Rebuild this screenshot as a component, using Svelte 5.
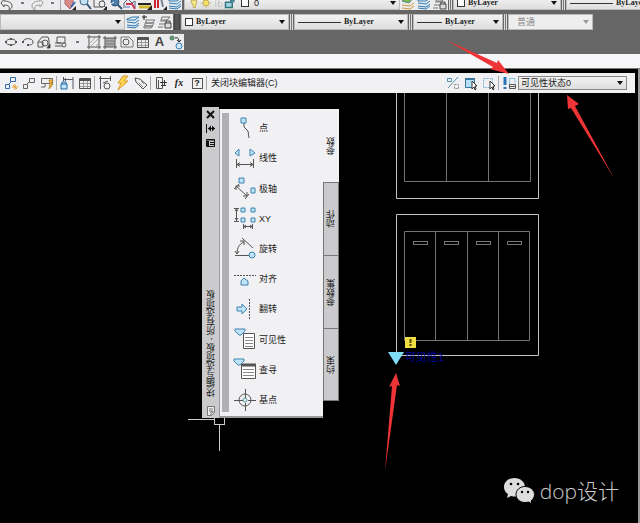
<script lang="ts">
    interface Tool {
        icon: string;
        label: string;
    }

    let visibility = $state("可见性状态0");
    let activeTab = $state("参数");

    const tabs = ["参数", "动作", "参数集", "约束"];

    const standardTools: (Tool | null)[] = [
        { icon: "undo", label: "放弃" },
        { icon: "dot", label: "放弃列表" },
        { icon: "redo", label: "重做" },
        { icon: "dot", label: "重做列表" },
        null,
        { icon: "pan", label: "平移" },
        { icon: "zoom", label: "实时缩放" },
        { icon: "zoomwin", label: "窗口缩放" },
        { icon: "zoomprev", label: "缩放上一个" },
        { icon: "match", label: "特性匹配" },
        { icon: "ruler", label: "测量" },
        { icon: "brush", label: "画笔" },
        { icon: "layers", label: "图层特性" },
    ];

    const layerTools: Tool[] = [
        { icon: "layersgreen", label: "图层状态" },
        { icon: "layers", label: "置为当前" },
        { icon: "layerlock", label: "上一个图层" },
    ];

    const layerRowTools: Tool[] = [
        { icon: "layers", label: "图层" },
        { icon: "layerplus", label: "新建图层" },
        { icon: "layerlock", label: "锁定图层" },
    ];

    const drawTools: Tool[] = [
        { icon: "ellipse", label: "椭圆" },
        { icon: "arc", label: "椭圆弧" },
        { icon: "insert", label: "插入块" },
        { icon: "block", label: "创建块" },
        { icon: "dot", label: "点" },
        { icon: "hatch", label: "图案填充" },
        { icon: "gradient", label: "渐变色" },
        { icon: "region", label: "面域" },
        { icon: "table", label: "表格" },
        { icon: "text", label: "多行文字" },
        { icon: "add", label: "添加选定对象" },
    ];

    const blockTools: (Tool | null)[] = [
        { icon: "editblock", label: "编辑块定义" },
        { icon: "saveblock", label: "保存块定义" },
        { icon: "testblock", label: "测试块" },
        null,
        { icon: "constraint", label: "约束" },
        { icon: "table", label: "块表" },
        null,
        { icon: "param", label: "参数" },
        { icon: "action", label: "动作" },
        { icon: "attr", label: "定义属性" },
        null,
        { icon: "palette", label: "编写选项板" },
        { icon: "fx", label: "参数管理器" },
        { icon: "help", label: "帮助" },
        null,
    ];

    const stateTools: (Tool | null)[] = [
        { icon: "percent", label: "可见性模式" },
        { icon: "show", label: "使可见" },
        { icon: "hide", label: "使不可见" },
        null,
        { icon: "states", label: "管理可见性状态" },
    ];

    const params: Tool[] = [
        { icon: "p-point", label: "点" },
        { icon: "p-linear", label: "线性" },
        { icon: "p-polar", label: "极轴" },
        { icon: "p-xy", label: "XY" },
        { icon: "p-rotate", label: "旋转" },
        { icon: "p-align", label: "对齐" },
        { icon: "p-flip", label: "翻转" },
        { icon: "p-visible", label: "可见性" },
        { icon: "p-lookup", label: "查寻" },
        { icon: "p-base", label: "基点" },
    ];

    const grip = 'fill="#bfe4f8" stroke="#3f83b0"';

    // 16x16 for toolbars, 24x24 for the p-* palette icons
    const icons: Record<string, string> = {
        undo: '<path d="M2 8l3-4v2c5 0 8 2 8 5 0 2-1 3-3 4 1-3 0-5-5-5v2z" fill="#eee"/>',
        redo: '<path d="M14 8l-3-4v2c-5 0-8 2-8 5 0 2 1 3 3 4-1-3 0-5 5-5v2z" fill="#eee" stroke="#999"/>',
        dot: '<path d="M7 8h3" stroke="#777" stroke-width="2"/>',
        pan: '<path d="M3 3h8v7l-3 4-5-5z" fill="#d98b88" stroke="#a66"/><path d="M9 12l4-5" stroke="#36b" stroke-width="2"/><path d="M10 15h4v-4z" fill="#222" stroke="none"/>',
        zoom: '<circle cx="7" cy="6" r="4" fill="#c4e1f4" stroke="#468"/><path d="M10 9l4 5" stroke="#357" stroke-width="2"/>',
        zoomwin: '<path d="M2 3h9v9H2z"/><circle cx="10" cy="9" r="3" fill="#eee"/><path d="M12 11l2 2"/><path d="M11 15h4v-4z" fill="#222" stroke="none"/>',
        zoomprev: '<circle cx="8" cy="7" r="4" fill="#4b7ea8" stroke="#357"/><path d="M11 10l4 4" stroke="#357" stroke-width="2"/><path d="M4 9l3-2" stroke="#fff"/>',
        match: '<path d="M2 13V8l4-4 4 4 3-2v7" stroke="#567"/><path d="M4 9h6l3 5" stroke="#c35" stroke-width="2"/><path d="M3 12h5" stroke="#47b"/>',
        ruler: '<path d="M1 9h13" stroke="#222" stroke-width="2"/><path d="M2 12h12" stroke="#d2b629" stroke-width="3"/><path d="M10 15h5v-5z" fill="#222" stroke="none"/>',
        brush: '<path d="M3 3v10M6 3v10" stroke="#c23" stroke-width="2"/><path d="M9 3l2 9" stroke="#789" stroke-width="2"/><path d="M11 15h4v-4z" fill="#222" stroke="none"/>',
        layers: '<path d="M2 5l5-2h7l-4 3H2zM2 8l8 1 4-3M2 11l8 1 4-3M2 13l8 1 4-3" stroke="#3978ab" fill="#d5ebf7"/>',
        layersgreen: '<path d="M2 6l5-3h6l-4 5z" fill="#7fba50" stroke="#587"/><path d="M2 10l8 1 4-3M2 13l8 1 4-3" stroke="#cb9a39"/>',
        layerplus: '<path d="M5 6h9l-3 3H5zM4 9h9l-2 3H4zM3 12h9l-2 2H3z" stroke="#777"/><path d="M1 3h5M3 1v5" stroke="#222"/>',
        layerlock: '<path d="M5 3h8l-3 3H4zM3 7h7M2 10h6M1 13h5" stroke="#777"/><path d="M8 9h6v5H8zM9 9V7h4v2" fill="#ddd" stroke="#444"/>',
        bulb: '<path d="M5 4h6l1 3-2 4v3H7v-3L4 7z" fill="#f5e689" stroke="#a89845"/>',
        sun: '<circle cx="8" cy="8" r="4" fill="#f5df66" stroke="#b69b38"/><path d="M8 1v2M8 13v2M1 8h2M13 8h2M3 13l1-1M12 12l1 1" stroke="#b69b38"/>',
        freeze: '<path d="M5 4v9M9 4v9" stroke="#bbb"/><circle cx="11" cy="10" r="3" stroke="#bbb"/>',
        lock: '<path d="M2 7h9v7H2zM9 7V4h4v3" fill="#9ed5df" stroke="#367684" stroke-width="2"/>',
        ellipse: '<ellipse cx="8" cy="8" rx="5" ry="3"/><path d="M7 5h2M2 8h2M12 8h2M7 11h2" stroke-width="2"/>',
        arc: '<path d="M3 8c1-5 10-4 10 0 0 3-3 3-5 3"/><path d="M2 8h2M7 11h2" stroke-width="2"/>',
        insert: '<path d="M2 8l4-5h6l1 3v5M2 8h5v5H2z"/><circle cx="9" cy="9" r="3"/><path d="M11 14h3v-4z" fill="#222"/>',
        block: '<path d="M4 3h8v6H4zM2 9h6M2 12h7"/><circle cx="11" cy="11" r="2" fill="#eee"/>',
        hatch: '<path d="M3 3h10v10H3zM1 3h2V1M13 1v2h2M1 13h2v2M13 15v-2h2"/><path d="M4 9l5-5M4 13l8-8M9 13l4-4" stroke="#aaa"/>',
        gradient: '<path d="M3 4h10v9H3z" fill="#aaa"/><path d="M1 4h2V2M13 2v2h2M1 13h2v2M13 15v-2h2"/><path d="M4 7h8M4 10h8" stroke="#777"/>',
        region: '<path d="M2 3h8l4 4v6H2z" stroke="#777"/><circle cx="7" cy="8" r="3"/>',
        table: '<path d="M2.500 3.500h11v10h-11z"/><path d="M3 8.500h10M3 11.500h10M6.500 5v8M10.500 5v8" stroke="#999"/><path d="M3 5h10" stroke-width="2"/>',
        add: '<circle cx="4" cy="4" r="2" fill="#68a35f" stroke="#476"/><path d="M7 4c3-1 4 1 4 4M9 6l2 2 2-2" stroke="#222"/><circle cx="11" cy="12" r="3" fill="#cbe7f9" stroke="#3b7dac"/>',
        editblock: '<path d="M7.500 2.500h5v4h-5zM2.500 9.500h4v4h-4zM6 9l2-2" stroke="#356baa"/><path d="M12 9v6M9 12h6M10 10l4 4" stroke="#e2a332"/>',
        saveblock: '<path d="M8.500 3.500h5v4h-5zM2.500 9.500h4v4h-4zM6 9l2-2" stroke="#666"/>',
        testblock: '<path d="M2.500 3.500h11v5h-11zM6 9v3M2 12h4" stroke="#666"/><path d="M10 5h4l-2 4h2l-4 5 1-5z" fill="#f1bd4b" stroke="#b98a2d"/>',
        constraint: '<path d="M5 4.500h9M4.500 2v4M14 2v12M5 5l2-2M5 4l2 2" stroke="#556"/><path d="M2 9h6v5H2zM3 9V7h4v2" fill="#c0e3fa" stroke="#2466a9"/>',
        param: '<path d="M2 3.500h12M3.500 1v13M13.500 1v5M6 8l5-2"/><circle cx="10" cy="11" r="3"/>',
        action: '<path d="M8 1h5L9 6h4L3 15l3-7H3z" fill="#ffd34f" stroke="#d79a31"/>',
        attr: '<path d="M2 3l5 1 7 6-4 4-7-7z" fill="#eee"/><path d="M6 8l4 4M8 6l3 3" stroke="#888"/>',
        palette: '<path d="M3.500 2.500h6v11h-6zM5.500 5v8"/><path d="M7 7.500h7M8 10.500h5M11.500 5v6" stroke="#333"/>',
        percent: '<path d="M2.500 3.500h4v3h-4zM13 2L3 13" stroke="#5b90ae"/><path d="M9.500 9.500h4v4h-4z" stroke="#888" stroke-dasharray="2 1"/>',
        show: '<path d="M2.500 3.500h9v9h-9z" fill="#b7dff7" stroke="#37759c"/><path d="M2 4h10" stroke="#37759c" stroke-width="2"/><path d="M9 6v8l2-2 1 3 1-1-1-3h2z" fill="#fff" stroke="#333"/>',
        hide: '<path d="M2.500 3.500h9v9h-9z" stroke="#7ab2d6" stroke-dasharray="2 1"/><path d="M9 6v8l2-2 1 3 1-1-1-3h2z" fill="#fff" stroke="#333"/>',
        states: '<path d="M4 2v8M4 12v2" stroke="#2876ba" stroke-width="3"/><path d="M8 3.500h6V8M8.500 3v9" stroke="#83bfe2"/><path d="M8.500 9.500h6v4h-6zM8 11.500h7" stroke="#555"/>',
        "p-point": `<path d="M11 7v4l4 4 1 7"/><path d="M8 2h5v5H8z" ${grip}/>`,
        "p-linear": `<path d="M6 3v7L2 7zM17 3v7l5-3z" ${grip}/><path d="M3.500 13v9M20.500 13v9M4 18.500h16M7 16.500l-3 2 3 2M17 16.500l3 2-3 2"/>`,
        "p-polar": `<path d="M6 1h5v5H6zM18 11h4v5h-4z" ${grip}/><path d="M3 9l11 10M6 7l-5 5M16 17l-4 5M3 13V9h4M10 19h4v-4"/>`,
        "p-xy": `<path d="M8 1h4v4H8zM18 1h4v4h-4zM8 11h4v4H8zM18 11h4v4h-4z" ${grip}/><path d="M3.500 1v13M1 1.500h5M1 14.500h5M2 4l1.500-2L5 4M2 11l1.500 2L5 11M10 19.500h10M10.500 17v5M19.500 17v5M13 18l-2 1.500 2 1.500M17 18l2 1.500-2 1.500"/>`,
        "p-rotate": `<path d="M2 18.500h14M9 1l11 10M4 17C4 11 6 7 11 5M2 14l2 3 2-3M7 4h4l0 4"/><circle cx="19" cy="18" r="3" ${grip}/>`,
        "p-align": `<path d="M1 8.500h22" stroke-dasharray="2 1"/><path d="M8 18v-4l3-3 4 3v4z" ${grip}/>`,
        "p-flip": `<path d="M4 10h5V7l5 5-5 5v-3H4z" ${grip}/><path d="M16.500 2v20" stroke-dasharray="2 1"/>`,
        "p-visible": `<path d="M10.500 5.500h11v15h-11z" fill="#fff"/><path d="M12 9.500h8M12 12.500h8M12 15.500h8M12 18.500h8" stroke="#888"/><path d="M2 1h10v2L8 7H6L2 3z" ${grip}/>`,
        "p-lookup": `<path d="M8.500 6.500h14v14h-14z" fill="#fff"/><path d="M8 7h15" stroke-width="3"/><path d="M10 11.500h11M10 14.500h11M10 17.500h11" stroke="#888"/><path d="M1 1h10v2L7 7H5L1 3z" ${grip}/>`,
        "p-base": '<circle cx="12" cy="12" r="6"/><circle cx="12" cy="12" r="2" stroke="#59a"/><path d="M12.500 1v9M12.500 15v8M1 12.500h9M15 12.500h8"/>',
    };
</script>

{#snippet icon(name: string, size = 16)}
    <svg
        width={size}
        height={size}
        viewBox={name.startsWith("p-") ? "0 0 24 24" : "0 0 16 16"}
        fill="none"
        stroke="#555"
        aria-hidden="true"
    >
        {@html icons[name] ?? ""}
    </svg>
{/snippet}

{#snippet tools(list: (Tool | null)[])}
    {#each list as t}
        {#if t}
            <button class="tool" aria-label={t.label}>
                {#if t.icon === "text"}
                    <b class="glyph">A</b>
                {:else if t.icon === "fx"}
                    <i class="fx">fx</i>
                {:else if t.icon === "help"}
                    <span class="help">?</span>
                {:else}
                    {@render icon(t.icon)}
                {/if}
            </button>
        {:else}
            <span class="sep"></span>
        {/if}
    {/each}
{/snippet}

{#snippet byLayer(kind: string, label: string)}
    <label class="combo {kind}">
        {#if kind === "color"}
            <span class="swatch"></span>
        {:else}
            <span class="sample"></span>
        {/if}
        <select aria-label={label}>
            <option>ByLayer</option>
        </select>
        <span class="arrow"></span>
    </label>
{/snippet}

<div class="page">
    <header>
        <div class="row first">
            <div class="bar standard">{@render tools(standardTools)}</div>
            <div class="combo layer">
                {#each ["bulb", "sun", "freeze", "lock"] as name}
                    {@render icon(name, 12)}
                {/each}
                <span class="swatch"></span>
                <select aria-label="图层"><option>0</option></select>
                <span class="arrow"></span>
            </div>
            <div class="bar">{@render tools(layerTools)}</div>
            <span class="grip"></span>
            {@render byLayer("color", "颜色控制")}
            <span class="grip"></span>
            {@render byLayer("line", "线型控制")}
        </div>
        <div class="row">
            <label class="combo space">
                <select aria-label="工作空间"><option></option></select>
                <span class="arrow"></span>
            </label>
            <div class="bar">{@render tools(layerRowTools)}</div>
            <span class="grip dark"></span>
            {@render byLayer("color", "颜色控制")}
            <span class="grip"></span>
            {@render byLayer("line", "线型控制")}
            <span class="grip"></span>
            {@render byLayer("weight", "线宽控制")}
            <span class="grip"></span>
            <label class="combo plot">
                <select aria-label="打印样式控制" disabled>
                    <option>普通</option>
                </select>
                <span class="arrow"></span>
            </label>
        </div>
        <div class="row">
            <div class="bar draw">{@render tools(drawTools)}</div>
        </div>
    </header>
    <div class="band"></div>

    <main>
        <div class="blockbar">
            {@render tools(blockTools)}
            <button class="close-editor">关闭块编辑器(C)</button>
            <span class="fill"></span>
            {@render tools(stateTools)}
            <label class="combo state">
                <select aria-label="可见性状态" bind:value={visibility}>
                    <option>可见性状态0</option>
                </select>
                <span class="arrow"></span>
            </label>
        </div>

        <div class="canvas">
            <svg class="drawing" width="100%" height="100%" fill="none">
                <g stroke="#c4c4c4">
                    <path d="M396.500 0V105.500H538.500V0" />
                    <path d="M396.500 121.500H538.500V262.500H396.500z" />
                </g>
                <g stroke="#747474">
                    <path d="M404.500 0V88.500H530.500V0M446.500 0V88M488.500 0V88" />
                    <path
                        d="M404.500 138.500H529.500V247.500H404.500zM435.500 138V247M467.500 138V247M498.500 138V247"
                    />
                    {#each [413.5, 444.5, 476.5, 507.5] as x}
                        <rect {x} y="148.500" width="14" height="3" />
                    {/each}
                </g>
                <path d="M188 326.500H214M219.500 332V358" stroke="#ccc" />
                <rect x="214.500" y="321.500" width="10" height="10" stroke="#ccc" />
                <path d="M388 259h16l-8 13z" fill="#7fdcf5" />
                <text x="405" y="268" fill="#0000a0">可见性1</text>
                <rect x="405" y="244" width="11" height="11" fill="#f0dd42" />
                <path d="M410.500 246v4M410.500 251v2" stroke="#554a00" stroke-width="2" />
            </svg>

            <section class="palette" aria-label="块编写选项板">
                <div class="titlebar">
                    <button aria-label="关闭">
                        <svg width="11" height="11" viewBox="0 0 11 11" stroke="#111" stroke-width="2">
                            <path d="M2 2l7 7M9 2l-7 7" />
                        </svg>
                    </button>
                    <button aria-label="自动隐藏">
                        <svg width="11" height="11" viewBox="0 0 11 11" stroke="#111">
                            <path d="M1.500 1v9M3 5.500h7" />
                            <path d="M3 5.500l3-3v6zM10 5.500l-3-3v6z" fill="#111" stroke="none" />
                        </svg>
                    </button>
                    <button aria-label="特性">
                        <svg width="11" height="11" viewBox="0 0 11 11" stroke="#111" fill="none">
                            <path d="M1.500 2.500h8v7h-8zM1 3h9M5 5.500h4M5 7.500h4" />
                            <path d="M3 4v5" stroke-width="2" />
                        </svg>
                    </button>
                    <span class="title">块编写选项板 - 所有选项板</span>
                    <svg width="11" height="13" viewBox="0 0 11 13" stroke="#777" fill="#eee">
                        <path d="M2.500 2.500h7v6l-3 3h-4zM4 5h4M4 7h4M6 11V8h3" />
                    </svg>
                </div>
                <div class="body">
                    <div class="scroll"></div>
                    <ul>
                        {#each params as p}
                            <li>
                                <button>{@render icon(p.icon, 24)}{p.label}</button>
                            </li>
                        {/each}
                    </ul>
                </div>
                <div class="tabs">
                    {#each tabs as tab}
                        <button
                            class:active={tab === activeTab}
                            onclick={() => (activeTab = tab)}
                        >
                            <span>{tab}</span>
                        </button>
                    {/each}
                </div>
            </section>
        </div>
    </main>

    <svg class="arrows" width="100%" height="100%" fill="#ee3436" aria-hidden="true">
        <path d="M446 40L497 63l1-3 11 14-19-5 3-2z" />
        <path d="M567 95l12 9-4 2 39 72-43-70-3 1z" />
        <path d="M396 373l4 13-3-1-12 86 7-85-3 1z" />
    </svg>

    <div class="watermark">
        <svg width="32" height="28" viewBox="0 0 32 28" fill="#ddd">
            <path d="M11.500 1C5.500 1 1 5 1 10c0 3 1.500 5.500 4 7l-1 4 4-2c1.500.5 3 .5 4.500.5C17 19 22 15 22 10S17.500 1 11.500 1z" />
            <path
                d="M22 9.500c-5 0-9 3.500-9 8s4 8 9 8c1.500 0 2.500-.2 3.500-.5l3.500 2-1-3c2-1.500 3.500-4 3.500-6.500 0-4.500-4.500-8-9.500-8z"
                stroke="#000"
            />
            <g fill="#000">
                <circle cx="8" cy="7" r="1.300" />
                <circle cx="15" cy="7" r="1.300" />
                <circle cx="19" cy="15" r="1.200" />
                <circle cx="25" cy="15" r="1.200" />
            </g>
        </svg>
        <span>dop设计</span>
    </div>
</div>

<style>
    :global(body) {
        margin: 0;
        background: #000;
    }

    .page {
        position: relative;
        display: flex;
        flex-direction: column;
        min-height: 100vh;
        overflow: hidden;
        font: 9px/12px "Liberation Sans", "Noto Sans CJK SC", sans-serif;
        color: #222;
    }

    button,
    select {
        padding: 0;
        border: 0;
        background: none;
        font: inherit;
        color: inherit;
        appearance: none;
    }

    svg {
        display: block;
        flex: none;
    }

    header {
        display: flex;
        flex-direction: column;
        gap: 4px;
        padding-bottom: 4px;
        background: #666;
    }

    .row {
        display: flex;
        height: 16px;
    }

    .row > * {
        flex: none;
    }

    .row.first {
        height: 10px;
        align-items: flex-end;
        overflow: hidden;
    }

    .first > * {
        height: 14px;
    }

    .bar {
        display: flex;
        align-items: center;
        background: #ececee;
    }

    .standard {
        width: 182px;
        justify-content: space-between;
        margin-right: 2px;
    }

    .draw {
        width: 181px;
        padding-left: 3px;
        justify-content: space-between;
    }

    .tool {
        display: flex;
        align-items: center;
        justify-content: center;
        width: 16px;
        height: 16px;
        flex: none;
    }

    .standard .tool {
        width: 14px;
    }

    .sep {
        width: 1px;
        height: 14px;
        margin-right: 1px;
        background: #aaa;
    }

    .glyph {
        font-size: 13px;
        color: #444;
    }

    .fx {
        font: italic bold 10px/12px "Liberation Serif", serif;
    }

    .help {
        width: 9px;
        border: 1px solid #555;
        font: bold 9px/9px "Liberation Sans", sans-serif;
        text-align: center;
    }

    .grip {
        box-sizing: border-box;
        width: 3px;
        margin: 0 1px;
        border: solid #ddd;
        border-width: 0 1px;
        background: #777;
    }

    .grip.dark {
        width: 6px;
        border-color: #444;
        background: #555;
    }

    .combo {
        box-sizing: border-box;
        display: flex;
        align-items: center;
        padding: 0 3px;
        gap: 3px;
        border: 1px solid #bbb;
        background: linear-gradient(#f3f3f3, #dedede);
        font: bold 8px/12px "Liberation Serif", "Noto Sans CJK SC", serif;
    }

    .combo select {
        flex: 1;
        min-width: 0;
    }

    .arrow {
        border: solid transparent;
        border-width: 4px 3px 0;
        border-top-color: #111;
    }

    .swatch {
        box-sizing: border-box;
        width: 8px;
        height: 8px;
        border: 1px solid #333;
        background: #fff;
    }

    .sample {
        width: 43px;
        height: 1px;
        background: #333;
    }

    .weight .sample {
        width: 25px;
    }

    .layer {
        width: 216px;
        gap: 0;
        font: 9px/12px "Liberation Sans", sans-serif;
    }

    .layer .swatch {
        margin: 0 5px;
    }

    .color {
        width: 108px;
    }

    .line {
        width: 114px;
    }

    .weight {
        width: 90px;
    }

    .space {
        width: 125px;
    }

    .plot {
        width: 85px;
        padding-left: 8px;
        background: #eee;
        font: 9px/12px "Noto Sans CJK SC", sans-serif;
        color: #888;
    }

    .plot select {
        opacity: 1;
    }

    .plot .arrow {
        border-top-color: #999;
    }

    .band {
        height: 14px;
        border-bottom: 1px solid #777;
        background: #f6f6f8;
    }

    main {
        flex: 1;
        display: flex;
        flex-direction: column;
        padding-top: 4px;
        border-right: 2px solid #999;
        background: #000;
    }

    .blockbar {
        display: flex;
        align-items: center;
        height: 20px;
        margin-right: 3px;
        padding: 0 8px 0 2px;
        background: #f1f0f3;
    }

    .blockbar .tool {
        width: 18px;
    }

    .close-editor {
        margin-left: 3px;
        white-space: nowrap;
    }

    .fill {
        flex: 1;
    }

    .state {
        width: 109px;
        height: 14px;
        padding-left: 2px;
        border-color: #888;
        font: 9px/12px "Liberation Sans", "Noto Sans CJK SC", sans-serif;
    }

    .canvas {
        position: relative;
        flex: 1;
        min-height: 360px;
    }

    .drawing,
    .arrows {
        position: absolute;
        inset: 0;
    }

    .drawing text {
        font-size: 11px;
    }

    .arrows {
        pointer-events: none;
    }

    .palette {
        position: absolute;
        left: 202px;
        top: 14px;
        display: flex;
    }

    .titlebar {
        display: flex;
        flex-direction: column;
        align-items: center;
        width: 17px;
        padding: 2px 0 1px;
        gap: 3px;
        background: #cbcbcd;
    }

    .title {
        flex: 1;
        padding-top: 4px;
        writing-mode: vertical-rl;
        transform: rotate(180deg);
        white-space: nowrap;
    }

    .body {
        display: flex;
        width: 101px;
        margin-top: 2px;
        padding: 4px 0 1px 2px;
        border: solid #999;
        border-width: 0 0 2px 1px;
        background: #f1f0f3;
    }

    .scroll {
        width: 7px;
        margin: 0 4px 3px 0;
        background: #b0b0b2;
    }

    ul {
        display: flex;
        flex-direction: column;
        flex: 1;
        margin: 0;
        padding: 0;
        min-height: 302px;
        list-style: none;
    }

    li {
        display: flex;
        flex: 1;
    }

    li button {
        display: flex;
        align-items: center;
        gap: 2px;
    }

    .tabs {
        display: flex;
        flex-direction: column;
        width: 16px;
        margin-top: 2px;
    }

    .tabs button {
        display: flex;
        align-items: center;
        justify-content: center;
        box-sizing: border-box;
        height: 73px;
        border: 1px solid #777;
        border-bottom-width: 0;
        background: #cbcbcd;
    }

    .tabs button:last-child {
        border-bottom-width: 1px;
    }

    .tabs button.active {
        border-color: #f1f0f3;
        background: #f1f0f3;
    }

    .tabs span {
        writing-mode: vertical-rl;
        transform: rotate(180deg);
    }

    .watermark {
        position: absolute;
        right: 21px;
        bottom: 18px;
        display: flex;
        align-items: center;
        gap: 5px;
        color: #ccc;
        font: 300 21px/28px "Open Sans", "Noto Sans CJK SC", sans-serif;
    }
</style>
